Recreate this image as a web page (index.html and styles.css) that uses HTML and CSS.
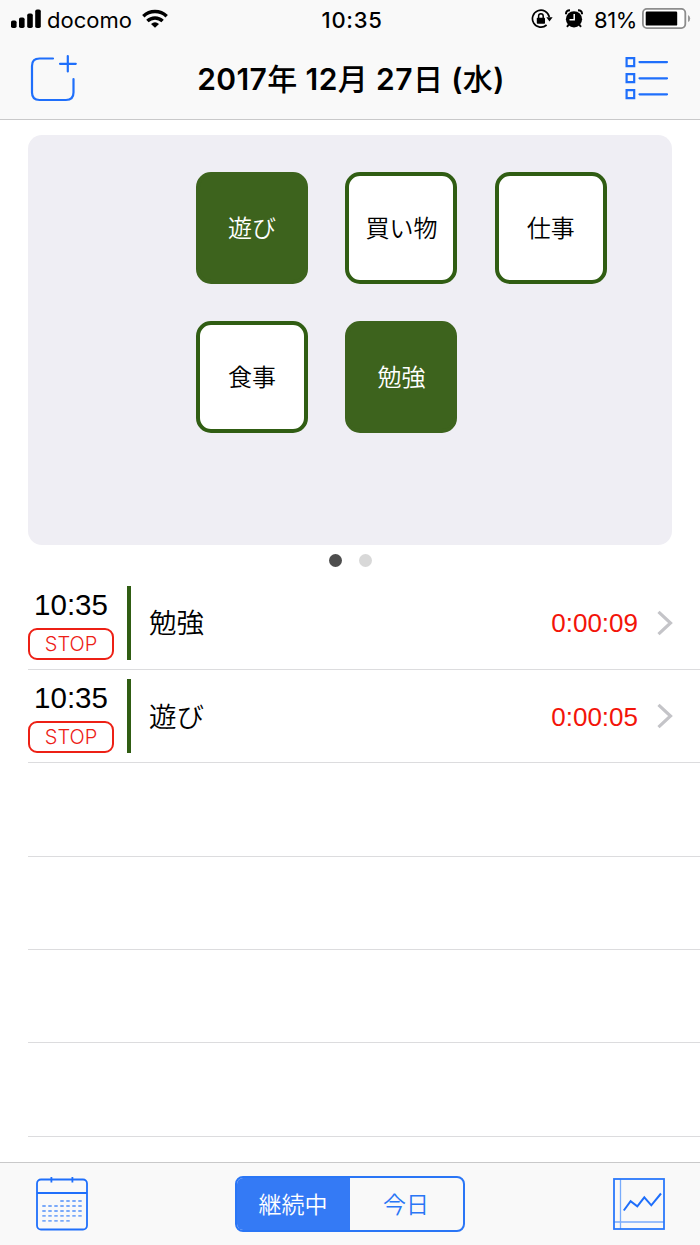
FILE: index.html
```html
<!DOCTYPE html>
<html lang="ja">
<head>
<meta charset="utf-8">
<title>タイムログ</title>
<link rel="stylesheet" href="styles.css">
</head>
<body>
<div class="screen">
  <header class="header">
    <div class="status">
      <div class="status-left">
        <svg class="signal" width="30" height="20" viewBox="0 0 30 20"><rect x="0" y="11.5" width="5.6" height="7.5" rx="1.8"/><rect x="8" y="8.500" width="5.6" height="10.5" rx="1.8"/><rect x="16.2" y="4.5" width="5.6" height="14.5" rx="1.8"/><rect x="24.2" y="0.5" width="5.6" height="18.5" rx="1.8"/></svg>
        <span class="carrier">docomo</span>
        <svg class="wifi" width="26" height="20" viewBox="0 0 26 20"><g fill="none" stroke="#000" stroke-width="3.400"><path d="M1.300 7.200A17 17 0 0 1 24.700 7.200"/><path d="M5.400 12A11 11 0 0 1 20.600 12"/></g><path d="M9 14.900a6.400 6.400 0 0 1 8 0L13 18.800z"/></svg>
      </div>
      <div class="status-time">10:35</div>
      <div class="status-right">
        <svg class="lock" width="22" height="20" viewBox="0 0 22 20"><path d="M18.300 8A8.500 8.500 0 1 0 15.600 16" fill="none" stroke="#000" stroke-width="1.700"/><path d="M15.300 8.300h6.300l-3.100 4.200z"/><rect x="5.800" y="8.800" width="8.200" height="6" rx=".7"/><path d="M7.600 9.500V7a2.300 2.300 0 0 1 4.600 0V9.500" fill="none" stroke="#000" stroke-width="1.500"/></svg>
        <svg class="alarm" width="18" height="20" viewBox="0 0 18 20"><circle cx="9" cy="10.300" r="8.100"/><path d="M1 5.200Q.8 1.400 5 1.300M17 5.200Q17.200 1.400 13 1.300" fill="none" stroke="#000" stroke-width="2"/><path d="M3.800 15.500l-1.800 2.400M14.200 15.500l1.800 2.400" stroke="#000" stroke-width="2"/><path d="M9.200 5v5.800H4.500" fill="none" stroke="#fff" stroke-width="1.500"/></svg>
        <span class="percent">81%</span>
        <svg class="battery" width="49" height="22" viewBox="0 0 49 22"><rect x=".9" y=".9" width="42.400" height="19.200" rx="4" fill="#fff" stroke="#8d8d8d" stroke-width="1.800"/><rect x="3.700" y="3.600" width="31.500" height="14" rx="1.200"/><path d="M46 7q2.200 1 2.200 3.500T46 14z" fill="#999"/></svg>
      </div>
    </div>
    <div class="nav">
      <svg class="add" width="48" height="48" viewBox="0 0 48 48"><path d="M24 3.500H10.500Q3 3.500 3 11V37.500Q3 45 10.500 45H37Q44.500 45 44.500 37.500V24M31 8.800H46.800M38.800 1.100V16.500" /></svg>
      <h1 class="title">2017<span class="kanji">年</span> 12<span class="kanji">月</span> 27<span class="kanji">日</span> (<span class="kanji">水</span>)</h1>
      <svg class="menu" width="44" height="44" viewBox="0 0 44 44"><path d="M1.600 1.100h7.600v8h-7.600zM1.600 17.100h7.600v8h-7.600zM1.600 33.100h7.600v8h-7.600zM14.500 5.100H42M14.500 21.300H42M14.500 37.300H42"/></svg>
    </div>
  </header>

  <main class="main">
    <section class="panel">
      <button class="tile active">遊び</button>
      <button class="tile">買い物</button>
      <button class="tile">仕事</button>
      <button class="tile">食事</button>
      <button class="tile active">勉強</button>
    </section>
    <div class="pager"><i class="dot current"></i><i class="dot"></i></div>
    <section class="list">
      <div class="row">
        <div class="start"><span class="clock">10:35</span><button class="stop">STOP</button></div>
        <div class="bar"></div>
        <div class="name">勉強</div>
        <div class="elapsed">0:00:09</div>
        <svg class="chevron" width="16" height="26" viewBox="0 0 16 26"><path d="M1.500 1.800L13.500 13L1.500 24.200"/></svg>
      </div>
      <div class="row">
        <div class="start"><span class="clock">10:35</span><button class="stop">STOP</button></div>
        <div class="bar"></div>
        <div class="name">遊び</div>
        <div class="elapsed">0:00:05</div>
        <svg class="chevron" width="16" height="26" viewBox="0 0 16 26"><path d="M1.500 1.800L13.500 13L1.500 24.200"/></svg>
      </div>
      <div class="row"></div>
      <div class="row"></div>
      <div class="row"></div>
      <div class="row"></div>
    </section>
  </main>

  <footer class="toolbar">
    <svg class="calendar" width="52" height="54" viewBox="0 0 52 54"><g fill="none" stroke="#1f6ffb" stroke-width="1.800"><rect x="1" y="2.500" width="50" height="50" rx="4"/><path d="M1 16H51M15.400 0V5.500M36.400 0V5.500"/></g><g stroke="#79a9fa" stroke-width="1.800" stroke-dasharray="3.400 2.600"><path d="M24.300 24H46M6.300 29H46M6.300 34H46M6.300 38.800H46M6.300 43.800H34"/></g></svg>
    <div class="segments">
      <button class="segment selected">継続中</button>
      <button class="segment">今日</button>
    </div>
    <svg class="chart" width="52" height="52" viewBox="0 0 52 52"><g fill="none"><path d="M7.500 1V51M1 44H51" stroke="#78abfb" stroke-width="1.300"/><rect x="1" y="1" width="50" height="50" stroke="#2a78fb" stroke-width="1.800"/><path d="M10.800 32.500L17.600 23.200L24.300 28.300L31.300 19.300L38.300 27.300L48 15.500" stroke="#1f6ffb" stroke-width="2"/></g></svg>
  </footer>
</div>
</body>
</html>
```
FILE: styles.css
```css
* { box-sizing: border-box; }
body { margin: 0; background: #fff; color: #000; font-family: Inter, "Noto Sans CJK JP", sans-serif; }
button { padding: 0; font: inherit; color: inherit; background: none; border: 0; }
svg { display: block; flex: none; }

.screen { width: 700px; height: 1245px; display: flex; flex-direction: column; overflow: hidden; }

.header { height: 120px; flex: none; background: #f9f9f9; border-bottom: 1px solid #c9c9ca; }
.status { height: 38px; display: grid; grid-template-columns: 1fr auto 1fr; align-items: center; padding: 0 9px 0 11px; }
.status-left, .status-right { display: flex; align-items: center; }
.status-right { justify-content: flex-end; }
.carrier { margin-left: 6px; width: 95px; font-size: 22px; line-height: 26px; padding-top: 1px; }
.status-time { font-size: 22px; font-weight: 500; line-height: 26px; letter-spacing: 0.7px; padding: 1px 0 0 2px; }
.alarm { margin-left: 12px; }
.percent { margin-left: 11px; width: 48px; font-size: 22px; line-height: 26px; padding-top: 1px; letter-spacing: -0.4px; white-space: nowrap; }

.nav { height: 81px; display: flex; align-items: center; justify-content: space-between; padding: 0 31px 0 29px; }
.add, .menu { fill: none; stroke: #1f6ffb; stroke-width: 2.2; stroke-linecap: round; }
.title { margin: 0; font-size: 30px; font-weight: 600; line-height: 40px; letter-spacing: 0.4px; white-space: nowrap; }
.kanji { font-family: "Noto Sans CJK JP Medium", "Noto Sans CJK JP", sans-serif; font-weight: 500; line-height: 1; }

.main { flex: 1; min-height: 0; overflow: hidden; padding-top: 15px; }
.panel { width: 644px; height: 410px; margin: 0 28px; padding: 37px 0 0 168px; border-radius: 14px; background: #efeef4; display: grid; grid-template-columns: repeat(3, 112px); grid-auto-rows: 112px; gap: 37.4px; align-content: start; }
.tile { padding-bottom: 4px; border: 4px solid #305d13; border-radius: 15px; background: #fff; font-size: 24px; font-weight: 350; font-family: "Noto Sans CJK JP", sans-serif; white-space: nowrap; }
.tile.active { border-color: #3d631d; background: #3d631d; color: #fff; }

.pager { height: 31.5px; display: flex; justify-content: center; align-items: center; gap: 17px; }
.dot { width: 13px; height: 13px; border-radius: 50%; background: #d8d8d8; }
.dot.current { background: #4d4d4d; }

.row { height: 93.35px; margin-left: 28px; padding-right: 27px; border-bottom: 1px solid #dcdcde; display: flex; align-items: center; }
.start { width: 86px; height: 74px; display: flex; flex-direction: column; align-items: center; justify-content: space-between; font-family: "Liberation Sans", sans-serif; }
.clock { font-size: 29.5px; line-height: 37px; }
.stop { width: 86px; height: 32px; border: 2px solid #ed2015; border-radius: 9px; color: #ed2015; font-family: Inter, sans-serif; font-size: 20px; font-weight: 300; line-height: 28px; }
.bar { width: 4px; height: 74px; margin-left: 13px; background: #305d13; }
.name { flex: 1; margin-left: 18px; padding-bottom: 3px; font-size: 27.5px; font-weight: 350; font-family: "Noto Sans CJK JP", sans-serif; line-height: 40px; }
.elapsed { padding-top: 2px; color: #f31409; font-family: "Liberation Sans", sans-serif; font-size: 26px; }
.chevron { margin-left: 19px; fill: none; stroke: #c4c4c8; stroke-width: 3.2; }

.toolbar { height: 83px; flex: none; padding: 0 35px 0 36px; border-top: 1px solid #c9c9ca; background: #f9f9f9; display: flex; align-items: center; justify-content: space-between; }
.segments { width: 230px; height: 56px; margin-right: 2px; border: 2px solid #2a76f6; border-radius: 8px; overflow: hidden; display: grid; grid-template-columns: 1fr 1fr; }
.segment { padding-bottom: 3px; color: #2a76f6; font-size: 23px; font-weight: 350; font-family: "Noto Sans CJK JP", sans-serif; }
.segment.selected { background: #347af5; color: #fff; }
```
